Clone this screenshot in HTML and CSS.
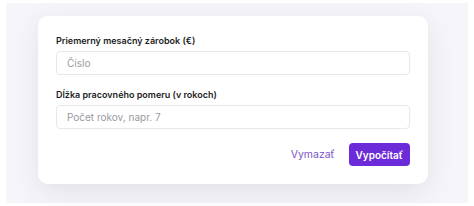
FILE: index.html
```html
<!DOCTYPE html>
<html lang="sk">
<head>
  <meta charset="UTF-8" />
  <meta name="viewport" content="width=device-width, initial-scale=1.0"/>
  <title>Výpočet odstupného</title>
  <link rel="stylesheet" href="styles.css">
</head>
<body>

<div class="page">
  <div class="card">
    <label for="zarobok">Priemerný mesačný zárobok (€)</label>
    <input type="text" id="zarobok" placeholder="Číslo">

    <label for="roky">Dĺžka pracovného pomeru (v rokoch)</label>
    <input type="text" id="roky" placeholder="Počet rokov, napr. 7">

    <div class="actions">
      <button class="btn-clear">Vymazať</button>
      <button class="btn-calc">Vypočítať</button>
    </div>
  </div>
</div>

</body>
</html>
```

FILE: styles.css
```css
* { box-sizing: border-box; margin: 0; padding: 0; }
body {
  font-family: Inter, "Noto Sans", sans-serif;
  background: #fff;
  color: #1d1d24;
}

.page {
  margin: 3px 6px;
  height: 200px;
  background: #f6f6fa;
  padding: 13px 40px 0 32px;
}

.card {
  background: #fff;
  border-radius: 10px;
  padding: 18px;
  box-shadow: 0 8px 28px rgba(30, 30, 60, 0.10);
}

label {
  display: block;
  font-size: 9px;
  font-weight: 600;
  line-height: 12px;
  margin: 1px 0 4px;
}

input {
  display: block;
  width: 100%;
  height: 24px;
  padding: 0 10px;
  margin-bottom: 14px;
  border: 1px solid #e7e7ec;
  border-radius: 4px;
  font-family: inherit;
  font-size: 10px;
  color: #333;
  background: #fff;
}

input::placeholder {
  color: #9a9aa2;
}

.actions {
  display: flex;
  justify-content: flex-end;
  align-items: center;
  gap: 14px;
  margin-top: 1px;
}

.btn-clear {
  background: none;
  border: none;
  color: #7d55c7;
  font-family: inherit;
  font-size: 10.5px;
  font-weight: 400;
  cursor: pointer;
}

.btn-calc {
  height: 23px;
  padding: 0 7px;
  background: #6c2bd9;
  color: #fff;
  border: none;
  border-radius: 4px;
  font-family: inherit;
  font-size: 10px;
  font-weight: 600;
  cursor: pointer;
}
```
